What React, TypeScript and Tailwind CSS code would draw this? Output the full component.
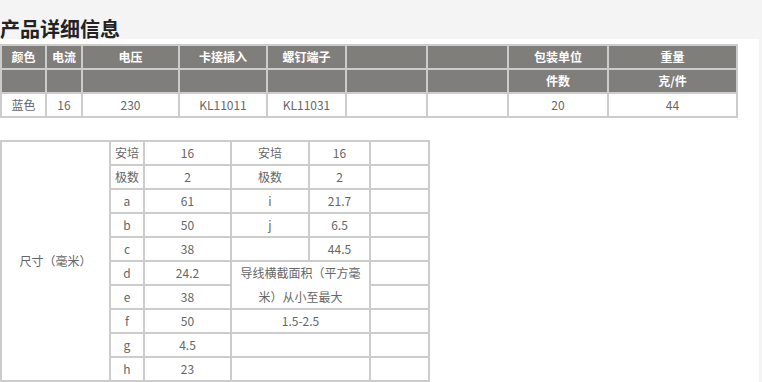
import React from "react";

const font = { fontFamily: '"Noto Sans CJK SC", "Noto Sans", sans-serif' };

function HCell({ children }: { children?: React.ReactNode }) {
  return (
    <div className="bg-[#807e7b] text-white font-bold text-[12px] leading-[22px] text-center h-[22px] whitespace-nowrap">
      {children}
    </div>
  );
}

function DCell({ children, className = "" }: { children?: React.ReactNode; className?: string }) {
  return (
    <div className={"bg-white text-[#666] text-[12px] leading-[22px] text-center whitespace-nowrap " + className}>
      {children}
    </div>
  );
}

export default function App() {
  const h1 = ["颜色", "电流", "电压", "卡接插入", "螺钉端子", "", "", "包装单位", "重量"];
  const h2 = ["", "", "", "", "", "", "", "件数", "克/件"];
  const d1 = ["蓝色", "16", "230", "KL11011", "KL11031", "", "", "20", "44"];

  return (
    <div className="w-[762px] h-[382px] bg-[#f4f4f4] overflow-hidden" style={font}>
      <div className="h-[39px] pt-[19px]">
        <h1 className="text-[20px] leading-[20px] font-bold text-[#222] m-0">产品详细信息</h1>
      </div>
      <div className="w-[759px] h-[343px] bg-white pt-[5px]">
        <div className="w-[738px] grid grid-cols-[43px_34px_95px_86px_77px_79px_79px_98px_127px] auto-rows-[22px] gap-[2px] p-[2px] bg-[#cccccc]">
          {h1.map((t, i) => (
            <HCell key={"a" + i}>{t}</HCell>
          ))}
          {h2.map((t, i) => (
            <HCell key={"b" + i}>{t}</HCell>
          ))}
          {d1.map((t, i) => (
            <DCell key={"c" + i}>{t}</DCell>
          ))}
        </div>

        <div className="mt-[22px] w-[430px] grid grid-cols-[107px_32px_85px_76px_59px_57px] auto-rows-[22px] gap-[2px] p-[2px] bg-[#cccccc]">
          <DCell className="row-span-10 flex items-center justify-center">尺寸（毫米）</DCell>
          <DCell>安培</DCell>
          <DCell>16</DCell>
          <DCell>安培</DCell>
          <DCell>16</DCell>
          <DCell />

          <DCell>极数</DCell>
          <DCell>2</DCell>
          <DCell>极数</DCell>
          <DCell>2</DCell>
          <DCell />

          <DCell>a</DCell>
          <DCell>61</DCell>
          <DCell>i</DCell>
          <DCell>21.7</DCell>
          <DCell />

          <DCell>b</DCell>
          <DCell>50</DCell>
          <DCell>j</DCell>
          <DCell>6.5</DCell>
          <DCell />

          <DCell>c</DCell>
          <DCell>38</DCell>
          <DCell />
          <DCell>44.5</DCell>
          <DCell />

          <DCell>d</DCell>
          <DCell>24.2</DCell>
          <DCell className="col-span-2 row-span-2 !leading-[24px] flex flex-col items-center justify-center">
            <span>导线横截面积（平方毫</span>
            <span>米）从小至最大</span>
          </DCell>
          <DCell />

          <DCell>e</DCell>
          <DCell>38</DCell>
          <DCell />

          <DCell>f</DCell>
          <DCell>50</DCell>
          <DCell className="col-span-2">1.5-2.5</DCell>
          <DCell />

          <DCell>g</DCell>
          <DCell>4.5</DCell>
          <DCell className="col-span-2" />
          <DCell />

          <DCell>h</DCell>
          <DCell>23</DCell>
          <DCell className="col-span-2" />
          <DCell />
        </div>
      </div>
    </div>
  );
}
